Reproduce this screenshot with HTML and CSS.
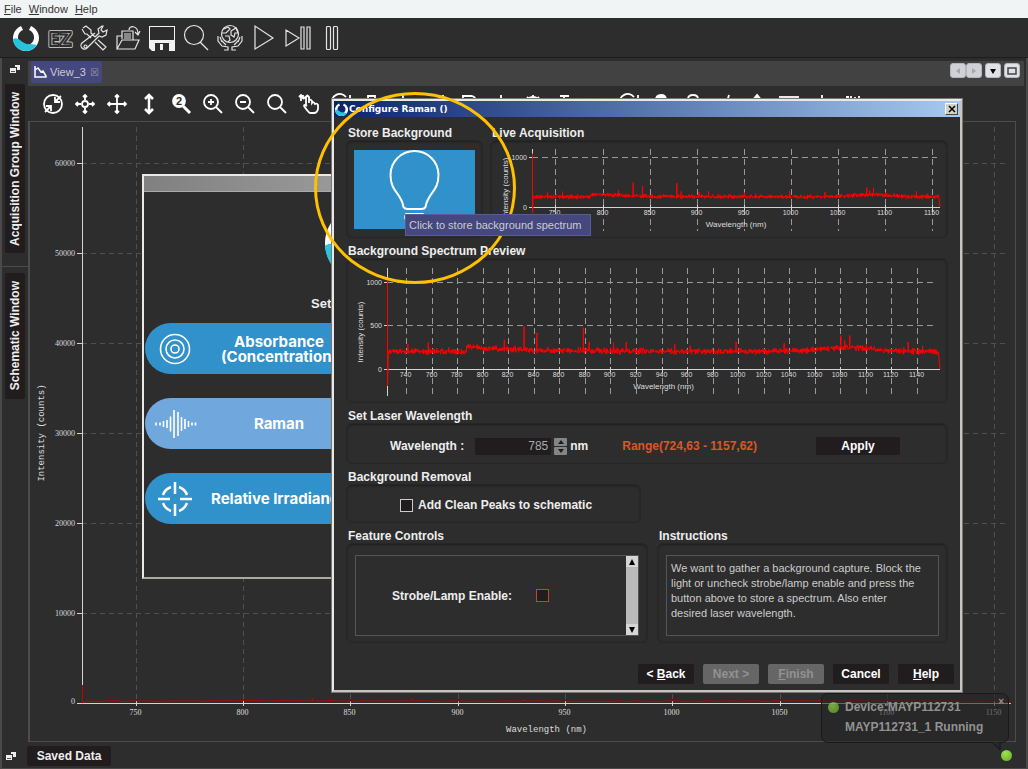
FILE: index.html
```html
<!DOCTYPE html>
<html lang="en">
<head>
    <meta charset="UTF-8">
    <meta name="viewport" content="width=device-width, initial-scale=1.0">
    <title>Configure Raman</title>
    <link rel="stylesheet" href="styles.css">
</head>
<body>
    <nav class="menubar">
        <a href="#"><u>F</u>ile</a>
        <a href="#"><u>W</u>indow</a>
        <a href="#"><u>H</u>elp</a>
    </nav>

    <div class="toolbar">
        <button type="button" aria-label="Home">
            <svg viewBox="0 0 26 26"><use href="#logo"/></svg>
        </button>
        <button type="button" aria-label="EZ mode">
            <svg viewBox="0 0 26 26"><text x="13" y="21" class="ez">EZ</text><text x="13" y="21" class="ez-inner">EZ</text></svg>
        </button>
        <button type="button" aria-label="Tools">
            <svg viewBox="0 0 26 26" class="line"><path d="M2 3l3-2 5 4v3l4 4m3 3 8 7-3 3-8-8m-4-4-4-4H4L1 4M14 12l4-4-1-4 4-3 1 0-2 4 2 2 4-2-1 5-4 2-3-1-12 12a3 3 0 1 1-5-5L14 8"/><circle cx="4.500" cy="21.500" r="1.500"/></svg>
        </button>
        <button type="button" aria-label="Open">
            <svg viewBox="0 0 26 26" class="line"><path d="M2 24V11h5M2 24l5-9h17l-4 9zM7 14V6h11v9M9 9h7M9 11h7M9 13h7M14 5c0-5 9-5 9 4M20 7l3 3 2-4"/></svg>
        </button>
        <button type="button" aria-label="Save">
            <svg viewBox="0 0 26 26"><path d="M0 1h26v25H3l-3-3z" fill="#f2f2f2"/><path d="M1 2h24v13H1z" fill="#2d2d2d"/><path d="M6 18h14v8H6z" fill="#2d2d2d"/><path d="M11 19h3v6h-3z" fill="#f2f2f2"/></svg>
        </button>
        <button type="button" aria-label="Search">
            <svg viewBox="0 0 26 26" class="line"><circle cx="11" cy="10" r="9.500"/><path d="M17 17l8 8"/></svg>
        </button>
        <button type="button" aria-label="Web">
            <svg viewBox="0 0 26 26" class="line"><circle cx="13" cy="9" r="8.500"/><path d="M7 4l4-2 2 2-4 4-4 0M14 6l5-3 2 5-3 0-1 4-3-2zM8 11l4 0 1 4-2 2M1 11v5l4 5 6 1v3H7M25 11v5l-4 5-6 1v3h4M4 15l5 5M22 15l-5 5M3 12l2 5M23 12l-2 5"/></svg>
        </button>
        <button type="button" aria-label="Play">
            <svg viewBox="0 0 26 26" class="line"><path d="M4 1v23l18-11z"/></svg>
        </button>
        <button type="button" aria-label="Step">
            <svg viewBox="0 0 26 26" class="line"><path d="M1 5v16l13-8zM16 2h3v22h-3zM22 2h3v22h-3z"/></svg>
        </button>
        <button type="button" aria-label="Pause">
            <svg viewBox="0 0 26 26" class="line"><rect x="7.500" y="1.500" width="4" height="23" rx="1"/><rect x="14.500" y="1.500" width="4" height="23" rx="1"/></svg>
        </button>
    </div>

    <div class="workspace">
        <aside class="sidebar">
            <button type="button" class="restore" aria-label="Restore group">
                <svg viewBox="0 0 10 10"><use href="#restore"/></svg>
            </button>
            <button type="button" class="side-tab side-tab-long"><span>Acquisition Group Window</span></button>
            <hr>
            <button type="button" class="side-tab"><span>Schematic Window</span></button>
        </aside>

        <main class="view">
            <div class="tabs">
                <button type="button" class="tab">
                    <svg width="12" height="12" viewBox="0 0 12 12"><path d="M1 0v11h11M1 4l3-2 3 4 2-1 3 5v1H1z" fill="none" stroke="#fff" stroke-width="1.500"/></svg>
                    <span>View_3</span>
                    <span class="tab-close">☒</span>
                </button>
                <div class="tab-tools">
                    <button type="button" disabled aria-label="Previous tab"><svg viewBox="0 0 8 8"><path d="M6 1v6L2 4z"/></svg></button>
                    <button type="button" disabled aria-label="Next tab"><svg viewBox="0 0 8 8"><path d="M2 1v6l4-3z"/></svg></button>
                    <button type="button" class="apart" aria-label="Tab list"><svg viewBox="0 0 8 8"><path d="M1 2h6L4 7z"/></svg></button>
                    <button type="button" class="apart" aria-label="Maximize"><svg viewBox="0 0 8 8"><path d="M0 1h8v6H0z" fill="none" stroke="#444" stroke-width="1.500"/></svg></button>
                </div>
            </div>

            <div class="view-tools">
                <button type="button" aria-label="Fit"><svg viewBox="0 0 20 20"><circle cx="10" cy="10" r="9"/><path d="M18 2l-6 6M12 3v5h5M2 18l6-6M3 12h5v5"/></svg></button>
                <button type="button" aria-label="Center"><svg viewBox="0 0 20 20"><circle cx="10" cy="10" r="3"/><path d="M10 1v5M10 14v5M1 10h5M14 10h5M8 3l2-2 2 2M8 17l2 2 2-2M3 8l-2 2 2 2M17 8l2 2-2 2"/></svg></button>
                <button type="button" aria-label="Pan"><svg viewBox="0 0 20 20"><path d="M10 1v18M1 10h18M8 3l2-2 2 2M8 17l2 2 2-2M3 8l-2 2 2 2M17 8l2 2-2 2"/></svg></button>
                <button type="button" aria-label="Scale height"><svg viewBox="0 0 20 20"><path d="M10 1v18M6 5l4-4 4 4M6 15l4 4 4-4" stroke-width="2.500"/></svg></button>
                <button type="button" aria-label="Zoom 2x"><svg viewBox="0 0 20 20"><circle cx="8" cy="7" r="6" fill="#fff"/><path d="M12 12l7 7" stroke-width="3"/><text x="8" y="11" class="two">2</text></svg></button>
                <button type="button" aria-label="Zoom in"><svg viewBox="0 0 20 20"><circle cx="8" cy="8" r="7"/><path d="M13 13l6 6M5 8h6M8 5v6"/></svg></button>
                <button type="button" aria-label="Zoom out"><svg viewBox="0 0 20 20"><circle cx="8" cy="8" r="7"/><path d="M13 13l6 6M5 8h6"/></svg></button>
                <button type="button" aria-label="Zoom"><svg viewBox="0 0 20 20"><circle cx="8" cy="8" r="7"/><path d="M13 13l6 6"/></svg></button>
                <button type="button" aria-label="Pick"><svg viewBox="0 0 20 20"><path d="M7 12V3q1.500-2 3 0v6V6q1.500-1 3 1v2q1.500-2 3 1 2-1 3 1v4q-1 4-4 4h-4q-2-1-6-7 0-2 3 0M2 1v6M0 3l2-2 2 2M4 1v4M4 5l5-4"/></svg></button>
                <button type="button" class="gap-after" aria-label="Refresh"><svg viewBox="0 0 20 20"><path d="M1 10a8 8 0 0 1 14-7M19 1v6h-6"/></svg></button>
                <button type="button" aria-label="Marker"><svg viewBox="0 0 20 20"><path d="M5 6V2h7v4"/></svg></button>
                <button type="button" aria-label="Cursor"><svg viewBox="0 0 20 20"><path d="M8 1v18"/></svg></button>
                <button type="button" aria-label="Bars"><svg viewBox="0 0 20 20"><path d="M7 19V4M12 19V1M16 19V1"/></svg></button>
                <button type="button" aria-label="Redo"><svg viewBox="0 0 20 20"><path d="M3 2h10q4 1 4 6M4 1v8"/></svg></button>
                <button type="button" aria-label="Peak"><svg viewBox="0 0 20 20"><path d="M10 1v18M2 19h16"/></svg></button>
                <button type="button" aria-label="Settings"><svg viewBox="0 0 20 20"><circle cx="10" cy="10" r="7"/><path d="M10 1v4M4 3l2 2M16 3l-2 2"/></svg></button>
                <button type="button" aria-label="Filter"><svg viewBox="0 0 20 20"><path d="M5 2h9M9 2v16"/></svg></button>
                <button type="button" class="skip" aria-label="Reload"><svg viewBox="0 0 20 20"><path d="M1 10a8 8 0 0 1 14-7M19 1v6h-6"/></svg></button>
                <button type="button" aria-label="Lamp"><svg viewBox="0 0 20 20"><path d="M5 19V6q0-5 5-5t5 5v13z" fill="#fff"/></svg></button>
                <button type="button" aria-label="Lock"><svg viewBox="0 0 20 20"><path d="M5 10V5q0-4 5-4t5 4v5"/></svg></button>
                <button type="button" aria-label="Edit"><svg viewBox="0 0 20 20"><path d="M14 1l-3 10"/></svg></button>
                <button type="button" aria-label="Up"><svg viewBox="0 0 20 20"><path d="M10 1L4 8h12z" fill="#fff"/></svg></button>
                <button type="button" aria-label="Table"><svg viewBox="0 0 20 20"><path d="M0 3h20"/></svg></button>
                <button type="button" aria-label="Integrate"><svg viewBox="0 0 20 20"><path d="M11 1v18"/></svg></button>
                <button type="button" aria-label="Statistics"><svg viewBox="0 0 20 20"><path d="M3 3h3M8 2v8M12 3v3M16 2v8"/></svg></button>
            </div>

            <div class="plot"><svg id="mainChart" class="chart chart-main"></svg></div>
        </main>
    </div>

    <footer class="statusbar">
        <button type="button" class="restore" aria-label="Restore group">
            <svg viewBox="0 0 10 10"><use href="#restore"/></svg>
        </button>
        <button type="button" class="saved">Saved Data</button>
        <span class="led"></span>
    </footer>

    <section class="wizard">
        <div class="wizard-title"></div>
        <svg class="wizard-logo" viewBox="0 0 26 26"><use href="#logo"/></svg>
        <p>Set</p>
        <button type="button" class="pill">
            <svg viewBox="0 0 36 36"><circle cx="18" cy="18" r="14.500"/><circle cx="18" cy="18" r="9"/><circle cx="18" cy="18" r="4"/></svg>
            <span>Absorbance<br>(Concentration)</span>
        </button>
        <button type="button" class="pill pill-active">
            <svg viewBox="0 0 36 36"><path d="M-1 16.500v3M3 16.500v3M6.500 15v6M10 14v8M13.500 10.500v15M17 4v28M21 6v24M24.500 11v14M28 13v10M31.500 15v6M35 16.500v3M38.500 16.500v3"/></svg>
            <span>Raman</span>
        </button>
        <button type="button" class="pill">
            <svg viewBox="0 0 36 36"><path d="M18 1v12M18 23v12M1 18h12M23 18h12" stroke-width="2.500"/><path d="M6 14A13 13 0 0 1 14 6M22 6A13 13 0 0 1 30 14M30 22A13 13 0 0 1 22 30M14 30A13 13 0 0 1 6 22" stroke-width="2.500"/></svg>
            <span>Relative Irradiance</span>
        </button>
    </section>

    <div class="balloon">
        <svg class="balloon-tail" width="12" height="9" viewBox="0 0 12 9"><path d="M0 0l8 8V0" fill="#272727" stroke="#151515"/></svg>
        <span class="balloon-led"></span>
        <p>Device:MAYP112731<br>MAYP112731_1 Running</p>
        <button type="button" aria-label="Close message">×</button>
    </div>

    <section class="dialog" role="dialog" aria-labelledby="dialogTitle">
        <header class="dialog-title">
            <svg viewBox="0 0 26 26"><use href="#logo"/></svg>
            <h1 id="dialogTitle">Configure Raman ()</h1>
            <button type="button" aria-label="Close"><svg viewBox="0 0 8 8"><path d="M1 1l6 6M7 1L1 7" stroke="#000" stroke-width="1.500"/></svg></button>
        </header>
        <form class="dialog-body">
            <div class="row">
                <section class="group group-store">
                    <h2>Store Background</h2>
                    <div class="box">
                        <button type="button" class="bulb" aria-label="Store background">
                            <svg viewBox="0 0 120 79"><path d="M49 57C47 43 36 42 36 25a24 24 0 0 1 48 0C84 42 73 43 71 57q-1 2-4 2H53q-3 0-4-2z" fill="none" stroke="#fff" stroke-width="2"/><path d="M51 63h18q3 6-1 9H52q-4-3-1-9z" fill="#fff"/></svg>
                        </button>
                        <span class="tooltip" role="tooltip">Click to store background spectrum</span>
                    </div>
                </section>
                <section class="group group-wide">
                    <h2>Live Acquisition</h2>
                    <div class="box"><svg id="liveChart" class="chart chart-live"></svg></div>
                </section>
            </div>

            <section class="group">
                <h2>Background Spectrum Preview</h2>
                <div class="box"><svg id="previewChart" class="chart chart-preview"></svg></div>
            </section>

            <section class="group">
                <h2>Set Laser Wavelength</h2>
                <div class="box laser">
                    <label for="wavelength">Wavelength :</label>
                    <input type="text" id="wavelength" value="785">
                    <span class="spinner">
                        <button type="button" aria-label="Increase"><svg viewBox="0 0 8 6"><path d="M1 5h6L4 1z"/></svg></button>
                        <button type="button" aria-label="Decrease"><svg viewBox="0 0 8 6"><path d="M1 1h6L4 5z"/></svg></button>
                    </span>
                    <span>nm</span>
                    <span class="range">Range(724,63 - 1157,62)</span>
                    <button type="button" class="btn apply">Apply</button>
                </div>
            </section>

            <section class="group group-removal">
                <h2>Background Removal</h2>
                <div class="box removal">
                    <input type="checkbox" id="cleanPeaks">
                    <label for="cleanPeaks">Add Clean Peaks to schematic</label>
                </div>
            </section>

            <div class="row row-last">
                <section class="group group-feature">
                    <h2>Feature Controls</h2>
                    <div class="box framed">
                        <div class="pane feature">
                            <div class="strobe">
                                <label for="strobe">Strobe/Lamp Enable:</label>
                                <input type="checkbox" id="strobe" class="changed">
                            </div>
                            <div class="scrollbar">
                                <button type="button" aria-label="Scroll up"><svg viewBox="0 0 8 8"><path d="M1 7h6L4 1z"/></svg></button>
                                <button type="button" aria-label="Scroll down"><svg viewBox="0 0 8 8"><path d="M1 1h6L4 7z"/></svg></button>
                            </div>
                        </div>
                    </div>
                </section>
                <section class="group group-wide">
                    <h2>Instructions</h2>
                    <div class="box framed">
                        <p class="pane instructions">We want to gather a background capture. Block the light or uncheck strobe/lamp enable and press the button above to store a spectrum. Also enter desired laser wavelength.</p>
                    </div>
                </section>
            </div>

            <div class="actions">
                <button type="button" class="btn">&lt; <u>B</u>ack</button>
                <button type="button" class="btn" disabled>Next &gt;</button>
                <button type="button" class="btn" disabled><u>F</u>inish</button>
                <button type="button" class="btn">Cancel</button>
                <button type="button" class="btn"><u>H</u>elp</button>
            </div>
        </form>
    </section>

    <div class="highlight"></div>

    <svg class="defs" aria-hidden="true">
        <symbol id="logo" viewBox="0 0 26 26">
            <path d="M8 1A13 13 0 1 0 18 1L16 5A8 8 0 1 1 10 5z" fill="#fff"/>
            <path d="M0 14q3-2 7 1 5 5 11 4l6 1q-4 6-11 6Q1 25 0 14z" fill="#27c4dc"/>
        </symbol>
        <symbol id="restore" viewBox="0 0 10 10">
            <path d="M0 4h6v5H0z" fill="#eee"/><path d="M1 7h4v1H1z" fill="#555"/><path d="M5 1h5v5H7V3H5z" fill="#eee"/>
        </symbol>
    </svg>

    <script src="charts.js"></script>
</body>
</html>
```
FILE: styles.css
```css
* { box-sizing: border-box; }
body { margin: 0; height: 100vh; display: flex; flex-direction: column; overflow: hidden; position: relative; background: #2d2d2d; color: #eee; font: 11px "Liberation Sans", Arial, sans-serif; }
h1, h2, p { margin: 0; }
button { font: inherit; color: inherit; padding: 0; border: 0; background: none; }
svg { display: block; overflow: visible; }
.defs { position: absolute; width: 0; height: 0; }

/* Menu and main toolbar */
.menubar { display: flex; gap: 7px; height: 18px; padding: 0 4px; align-items: center; background: #f0f4f4; }
.menubar a { color: #333; text-decoration: none; }
.toolbar { display: flex; gap: 8px; height: 40px; padding: 0 13px; align-items: center; border-bottom: 1px solid #1c1c1c; }
.toolbar svg { width: 26px; height: 26px; }
.line { fill: none; stroke: #e4e4e4; stroke-width: 1.2; }
.ez, .ez-inner { font: bold 20px "Open Sans", sans-serif; text-anchor: middle; fill: none; stroke: #bbb; stroke-width: 4; stroke-linejoin: round; }
.ez-inner { stroke: #2d2d2d; stroke-width: 2; fill: #bbb; }

/* Workspace */
.workspace { flex: 1; display: flex; min-height: 0; border-left: 2px solid #4a4a4a; border-right: 2px solid #4a4a4a; }
.sidebar { width: 26px; display: flex; flex-direction: column; align-items: center; padding-top: 6px; }
.restore svg { width: 10px; height: 10px; }
.sidebar .restore { margin-bottom: 10px; }
.side-tab { width: 20px; height: 126px; background: #211c1d; border-radius: 2px; font-weight: bold; font-size: 12px; display: flex; align-items: center; justify-content: center; }
.side-tab-long { height: 169px; }
.side-tab span { writing-mode: vertical-rl; transform: rotate(180deg); white-space: nowrap; }
.sidebar hr { width: 100%; margin: 13px 0 6px; border: 0; border-top: 1px solid #4c4c4c; }
.view { flex: 1; min-width: 0; display: flex; flex-direction: column; padding-top: 3px; }
.tabs { height: 25px; display: flex; justify-content: space-between; padding: 0 4px 3px 3px; margin-right: 2px; background: #424242; }
.tab { display: flex; align-items: center; gap: 4px; padding: 0 3px; background: #45477f; border-radius: 2px; color: #ccc; }
.tab-close { font-size: 10px; font-family: "DejaVu Sans", sans-serif; color: #999; }
.tab-tools { display: flex; padding-top: 2px; }
.tab-tools button { width: 16px; height: 15px; background: #dfe1e6; border: 1px solid #b5b7bc; border-radius: 3px; display: flex; align-items: center; justify-content: center; }
.tab-tools button:disabled { background: #cfd1d6; fill: #a5a7ac; }
.tab-tools .apart { margin-left: 3px; }
.tab-tools svg { width: 8px; height: 8px; }
.view-tools { height: 35px; display: flex; gap: 12px; align-items: center; padding: 1px 15px 0; }
.view-tools svg { width: 20px; height: 20px; fill: none; stroke: #fff; stroke-width: 1.8; }
.view-tools .skip { margin-left: 32px; }
.view-tools .two { font: bold 11px "Liberation Sans", sans-serif; text-anchor: middle; fill: #2d2d2d; stroke: none; }
.plot { flex: 1; min-height: 0; margin-right: 10px; border: 1px solid #4c4c4c; border-left-width: 2px; }

/* Charts */
.chart { width: 100%; font-size: 7px; font-weight: normal; fill: #ddd; }
.chart-main { height: 100%; font-family: "Liberation Serif", serif; font-size: 8px; }
.chart-live { height: 96px; }
.chart-preview { height: 143px; }
.chart .grid { stroke: #999; stroke-dasharray: 6 4; }
.chart-main .grid { stroke: #505050; stroke-dasharray: 5 4; }
.chart .axis { stroke: #d4d4d4; }
.chart .trace { fill: none; stroke: #f00; stroke-width: 1; }
.chart-main .trace { stroke: #c80000; }
.chart .title { font-size: 8px; text-anchor: middle; }
.chart-main .title { font: 9px "Liberation Mono", monospace; }

.statusbar { height: 27px; display: flex; align-items: center; padding: 1px 14px 0 4px; border: 2px solid #4a4a4a; border-top: 0; border-bottom-width: 1px; }
.saved { width: 84px; height: 20px; margin-left: 11px; background: #211c1d; border-radius: 2px; font-weight: bold; font-size: 12px; }
.led, .balloon-led { width: 11px; height: 11px; border-radius: 50%; background: radial-gradient(circle at 40% 30%, #a2e052, #5cad24); }
.led { margin-left: auto; }

/* Window behind the dialog */
.wizard { position: absolute; left: 142px; top: 174px; width: 400px; height: 405px; background: #2d2d2d; border: 2px solid #eee8e4; border-bottom-color: #aaa9a2; overflow: hidden; }
.wizard-title { height: 16px; background: linear-gradient(90deg, #808080, #b4b4b4); border-bottom: 1px solid #aaa; }
.wizard-logo { width: 72px; height: 72px; margin: 15px 0 0 181px; }
.wizard p { margin: 17px 0 12px 167px; font-size: 13px; line-height: 15px; font-weight: bold; }
.pill { display: flex; align-items: center; width: 390px; height: 51px; margin: 0 0 24px 1px; padding-left: 12px; border-radius: 26px; background: #3191ca; color: #fff; font: bold 15px/15px Inter, sans-serif; }
.pill-active { background: #70a8de; }
.pill svg { width: 36px; height: 36px; margin-right: 18px; fill: none; stroke: #fff; stroke-width: 1.6; }
.pill span { width: 136px; white-space: nowrap; text-align: center; }

/* Dialog */
.dialog { position: absolute; left: 331px; top: 98px; width: 632px; background: #2d2d2d; border: 3px solid #ece8e3; border-right-color: #c9c5be; border-bottom-color: #c9c5be; outline: 1px solid #777; outline-offset: -1px; }
.dialog-title { height: 16px; display: flex; align-items: center; gap: 1px; padding: 0 2px 0 1px; background: linear-gradient(90deg, #0a246a, #a6caf0); }
.dialog-title > svg { width: 13px; height: 13px; }
.dialog-title h1 { font: bold 9px "DejaVu Sans", sans-serif; color: #fff; }
.dialog-title button { width: 13px; height: 12px; margin-left: auto; background: #d4d0c8; border: 1px solid #fff; border-right-color: #444; border-bottom-color: #444; display: flex; align-items: center; justify-content: center; }
.dialog-title button svg { width: 8px; height: 8px; }
.dialog-body { padding: 9px 12px 6px; font-weight: bold; font-size: 12px; }
.row { display: flex; gap: 7px; }
.row-last { gap: 9px; }
.group { margin-bottom: 6px; }
.group h2 { padding-left: 2px; font-size: 12px; line-height: 14px; }
.group-wide { flex: 1; min-width: 0; }
.group-store { width: 137px; }
.group-removal { width: 295px; }
.group-feature { width: 302px; }
.box { position: relative; border: 1px solid #262626; border-radius: 6px; box-shadow: inset 0 1px 2px #1f1f1f; }
.group-store .box { height: 98px; padding: 9px 7px; }
.bulb { display: block; width: 100%; height: 79px; background: #3191ca; }
.bulb svg { width: 100%; height: 79px; }
.tooltip { position: absolute; left: 58px; top: 73px; z-index: 2; padding: 0 3px; border: 1px solid #5a5c94; background: #45477f; color: #ccc; font-size: 11px; font-weight: normal; line-height: 20px; white-space: nowrap; width: 186px; }
.laser { height: 41px; display: flex; align-items: center; padding-left: 43px; padding-top: 5px; }
.laser input { width: 76px; height: 17px; margin-left: 11px; padding: 0 3px; background: #211c1d; border: 0; color: #aaa; font: 12px "Liberation Sans", sans-serif; text-align: right; }
.spinner { display: flex; flex-direction: column; gap: 1px; margin: 0 3px; }
.spinner button { width: 13px; height: 8px; background: #858585; border-radius: 1px; }
.spinner svg { width: 8px; height: 6px; margin: 0 auto; fill: #1c1c1c; }
.range { margin-left: 34px; color: #dd5528; }
.btn { width: 56px; height: 20px; background: #211c1d; border-radius: 2px; font-weight: bold; font-size: 12px; color: #fff; }
.btn:disabled { background: #666; color: #929292; }
.apply { width: 84px; height: 18px; margin-left: auto; margin-right: 47px; }
.removal { height: 39px; display: flex; align-items: center; gap: 5px; padding-left: 53px; padding-top: 3px; }
input[type="checkbox"] { appearance: none; width: 13px; height: 13px; margin: 0; background: #211c1d; border: 1px solid #ccc; }
input[type="checkbox"].changed { border-color: #c2491f; }
.framed { height: 100px; padding: 11px 8px; }
.pane { height: 81px; border: 1px solid #555; }
.feature { display: flex; justify-content: space-between; }
.strobe { display: flex; align-items: center; gap: 24px; padding-left: 36px; font-size: 12px; }
.scrollbar { width: 12px; display: flex; flex-direction: column; justify-content: space-between; background: #bababa; }
.scrollbar button { width: 12px; height: 11px; background: #d6d6d6; }
.scrollbar svg { width: 8px; height: 8px; margin: 0 auto; }
.instructions { padding: 5px 16px 5px 4px; font-size: 11px; font-weight: normal; line-height: 15px; color: #ccc; }
.actions { display: flex; justify-content: flex-end; gap: 9px; margin: 15px -6px 0 0; }

/* Device message */
.balloon { position: absolute; right: 19px; bottom: 26px; width: 188px; height: 50px; padding: 3px 8px 0 6px; display: flex; align-items: flex-start; gap: 6px; background: rgba(36, 36, 36, 0.6); border: 1px solid #191919; border-radius: 7px; color: #929292; font-weight: bold; font-size: 12px; line-height: 20px; }
.balloon p { flex: 1; white-space: nowrap; }
.balloon-led { margin-top: 5px; opacity: 0.7; }
.balloon button { position: absolute; right: 4px; top: -2px; font-size: 10px; }
.balloon-tail { position: absolute; right: 4px; bottom: -9px; }

.highlight { position: absolute; left: 314px; top: 92px; width: 202px; height: 192px; border: 3px solid #ffc000; border-radius: 50%; pointer-events: none; }
```
FILE: charts.js
```js
const NS = "http://www.w3.org/2000/svg";
const MIN_NM = 724.63;
const MAX_NM = 1157.62;

// Narrow peaks as [wavelength, counts]
const peaks = [
    [741, 290], [757, 310], [773, 255], [816.5, 340], [832, 495], [842, 420],
    [878.4, 480], [883, 315], [902, 305], [912, 315], [950, 290], [962, 270],
    [998, 315], [1035.6, 300], [1080, 390], [1083, 330], [1087, 390],
    [1100, 290], [1132.7, 315], [1144, 270]
];

function makeRandom(seed) {
    return function () {
        seed = (seed * 16807) % 2147483647;
        return seed / 2147483647;
    };
}

function add(svg, tag, attrs, text) {
    const el = document.createElementNS(NS, tag);
    for (const key in attrs) el.setAttribute(key, attrs[key]);
    if (text !== undefined) el.textContent = text;
    svg.appendChild(el);
}

function baseline(nm) {
    let v = 205;
    if (nm > 787) v += 55 * Math.exp(-(nm - 787) / 45);
    v += 45 * Math.exp(-Math.pow((nm - 1085) / 28, 2));
    return v;
}

function drawChart(id, o) {
    const svg = document.getElementById(id);
    const box = svg.getBoundingClientRect();
    svg.innerHTML = "";
    const right = box.width - o.right;
    const zero = box.height - o.bottom;
    const x = nm => o.left + (nm - MIN_NM) / (MAX_NM - MIN_NM) * (right - o.left);
    const y = v => zero - v / o.max * (zero - o.top);
    const snap = v => Math.floor(v) + 0.5;

    for (let nm = o.firstX; nm < MAX_NM; nm += o.stepX) {
        const px = snap(x(nm));
        add(svg, "line", { x1: px, x2: px, y1: o.top, y2: zero + o.below, class: "grid" });
        add(svg, "line", { x1: px, x2: px, y1: zero - 2, y2: zero + 3, class: "axis" });
        add(svg, "text", { x: px - 1, y: zero + o.labelY, "text-anchor": "middle" }, nm);
    }
    for (let v = 0; v <= o.max; v += o.stepY) {
        const py = snap(y(v));
        if (v > 0) add(svg, "line", { x1: o.left, x2: right - 3, y1: py, y2: py, class: "grid" });
        add(svg, "line", { x1: o.left - o.tick, x2: o.left, y1: py, y2: py, class: "axis" });
        add(svg, "text", { x: o.left - o.tick - 2, y: py + (v > 0 ? 2 : o.zeroY), "text-anchor": "end" }, v);
    }
    add(svg, "line", { x1: snap(o.left), x2: snap(o.left), y1: o.top, y2: zero + o.axisBelow, class: "axis" });
    add(svg, "line", { x1: o.left, x2: right, y1: snap(zero), y2: snap(zero), class: "axis" });

    // Spectrum trace
    const random = makeRandom(o.seed);
    const points = [[snap(o.left), y(o.start)], [snap(o.left), zero + o.dip], [o.left + 1, zero]];
    for (let nm = MIN_NM + 1; nm < MAX_NM - 1; nm += o.sample) {
        points.push([x(nm), y(baseline(nm) + o.lift + (random() + random() - 1) * o.noise)]);
        const peak = peaks.find(p => p[0] >= nm && p[0] < nm + o.sample);
        if (peak) points.push([x(peak[0]), y(peak[1])], [x(peak[0]), y(baseline(nm))]);
    }
    points.push([right, zero]);
    add(svg, "polyline", { points: points.map(p => p.map(n => n.toFixed(1)).join(",")).join(" "), class: "trace" });

    add(svg, "text", { x: (o.left + right) / 2, y: zero + o.titleY, class: "title" }, "Wavelength (nm)");
    const mid = o.titleMid;
    add(svg, "text", { x: o.titleX, y: mid, class: "title", transform: `rotate(-90 ${o.titleX} ${mid})` }, "Intensity (counts)");
}

function drawAll() {
    drawChart("mainChart", {
        left: 52, right: 4, top: 5, bottom: 38, max: 64000, firstX: 750, stepX: 50, stepY: 10000,
        below: 3, axisBelow: 0, dip: 0, start: 2000, labelY: 12, titleY: 29, titleX: 14, titleMid: 311,
        tick: 5, zeroY: 0, seed: 11, noise: 90, sample: 0.5, lift: 0
    });
    drawChart("liveChart", {
        left: 41, right: 7, top: 8, bottom: 30, max: 1170, firstX: 750, stepX: 50, stepY: 1000,
        below: 24, axisBelow: 6, dip: 6, start: 1080, labelY: 8, titleY: 20, titleX: 17, titleMid: 47,
        tick: 3, zeroY: 2, seed: 21, noise: 50, sample: 0.3, lift: 0
    });
    drawChart("previewChart", {
        left: 40, right: 7, top: 9, bottom: 33, max: 1173, firstX: 740, stepX: 20, stepY: 500,
        below: 27, axisBelow: 27, dip: 17, start: 1050, labelY: 8, titleY: 20, titleX: 16, titleMid: 73,
        tick: 3, zeroY: 2, seed: 35, noise: 42, sample: 0.25, lift: 0
    });
}

drawAll();
window.addEventListener("resize", drawAll);
```
